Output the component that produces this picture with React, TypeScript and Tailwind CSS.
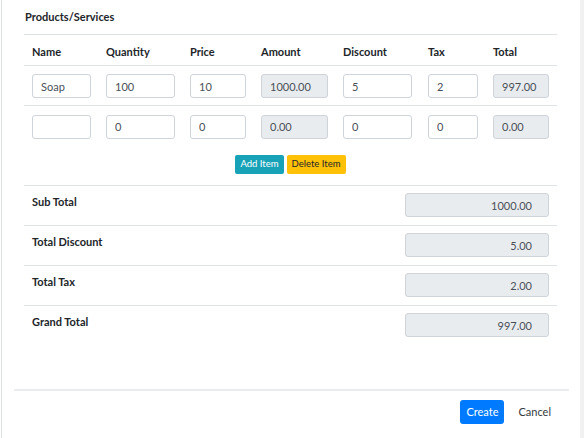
import React from "react";

const COLUMNS = ["Name", "Quantity", "Price", "Amount", "Discount", "Tax", "Total"];

const ROWS = [
  ["Soap", "100", "10", "1000.00", "5", "2", "997.00"],
  ["", "0", "0", "0.00", "0", "0", "0.00"],
];

const READONLY = [3, 6];

const INPUT_WIDTHS = ["w-[59px]", "w-[69px]", "w-[56px]", "w-[67px]", "w-[69px]", "w-[50px]", "w-[56px]"];

const TOTALS = [
  { label: "Sub Total", value: "1000.00" },
  { label: "Total Discount", value: "5.00" },
  { label: "Total Tax", value: "2.00" },
  { label: "Grand Total", value: "997.00" },
];

const grid = "grid grid-cols-[74px_84px_71px_82px_85px_65px_72px]";

function Field({ value, readOnly, className }: { value: string; readOnly?: boolean; className: string }) {
  return (
    <input
      defaultValue={value}
      readOnly={readOnly}
      className={`h-[24px] rounded-[3px] border border-[#ced4da] px-[8px] text-[11px] text-[#495057] outline-none ${
        readOnly ? "bg-[#e9ecef]" : "bg-white"
      } ${className}`}
    />
  );
}

export default function App() {
  return (
    <div
      className="flex h-[438px] w-[584px] bg-white pl-px text-[#212529]"
      style={{ fontFamily: 'Lato, "Liberation Sans", sans-serif' }}
    >
      <div className="flex w-[579px] flex-col border-l border-[#dee2e6]">
        <div className="pl-[22px]">
          <div className="flex h-[34px] items-center pl-px text-[11px] font-bold">Products/Services</div>

          {/* items table */}
          <div className="w-[533px]">
            <div className={`${grid} h-[32px] items-end border-y border-[#dee2e6] pb-[5px]`}>
              {COLUMNS.map((c) => (
                <div key={c} className="px-[8px] text-[11px] font-bold leading-[16px]">
                  {c}
                </div>
              ))}
            </div>
            {ROWS.map((row, r) => (
              <div
                key={r}
                className={`${grid} h-[40px] items-center ${r === 0 ? "border-b border-[#dee2e6]" : ""}`}
              >
                {row.map((v, i) => (
                  <div key={i} className="px-[8px]">
                    <Field value={v} readOnly={READONLY.includes(i)} className={INPUT_WIDTHS[i]} />
                  </div>
                ))}
              </div>
            ))}
          </div>

          <div className="flex h-[39px] w-[533px] items-start justify-center gap-[3px] pt-[9px]">
            <button className="h-[19px] rounded-[2px] bg-[#17a2b8] px-[5px] text-[9.5px] text-white">Add Item</button>
            <button className="h-[19px] rounded-[2px] bg-[#ffc107] px-[5px] text-[9.5px] text-[#212529]">
              Delete Item
            </button>
          </div>

          {/* totals */}
          <div className="w-[533px]">
            {TOTALS.map((t) => (
              <div
                key={t.label}
                className="flex h-[40px] items-start justify-between border-t border-[#dee2e6] px-[8px] pt-[7px]"
              >
                <span className="pt-[1px] text-[11px] font-bold leading-[15px]">{t.label}</span>
                <Field value={t.value} readOnly className="w-[144px] pr-[16px] text-right" />
              </div>
            ))}
          </div>
        </div>

        <div className="mt-auto ml-[12px] mr-[11px] flex h-[49px] items-start justify-end border-t-2 border-[#e9ecef] pt-[9px] pr-[11px]">
          <button className="h-[24px] rounded-[3px] bg-[#007bff] px-[6px] text-[11px] text-white">Create</button>
          <button className="ml-[7px] h-[24px] px-[7px] text-[11px] text-[#343a40]">Cancel</button>
        </div>
      </div>
      <div className="w-[4px] bg-[#f1f1f1]" />
    </div>
  );
}
